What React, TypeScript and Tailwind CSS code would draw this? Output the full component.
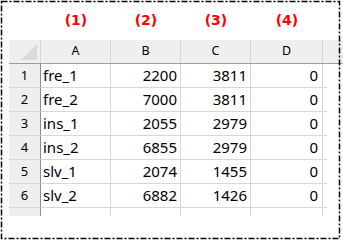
import React from "react";

const rows: [string, number, number, number][] = [
  ["fre_1", 2200, 3811, 0],
  ["fre_2", 7000, 3811, 0],
  ["ins_1", 2055, 2979, 0],
  ["ins_2", 6855, 2979, 0],
  ["slv_1", 2074, 1455, 0],
  ["slv_2", 6882, 1426, 0],
];

const cols = ["A", "B", "C", "D"];
const widths = ["w-[70px]", "w-[70px]", "w-[70px]", "w-[72px]"];

export default function App() {
  return (
    <div className="relative w-[343px] h-[241px] bg-white overflow-hidden">
      <svg className="absolute inset-0 pointer-events-none" width="343" height="241">
        <rect
          x="1.5"
          y="1.5"
          width="338"
          height="237"
          fill="none"
          stroke="#000"
          strokeWidth="1.5"
          strokeDasharray="6 2 2 2"
        />
      </svg>
      <div className="pl-[9px] pt-[10px]">
        <div className="flex h-[20px] items-center">
          <div className="w-[32px]" />
          {["(1)", "(2)", "(3)", "(4)"].map((l, i) => (
            <div
              key={l}
              className={`${widths[i]} text-center text-[14px] font-bold text-[#ff0000] leading-[20px]`}
              style={{ fontFamily: '"DejaVu Sans", sans-serif' }}
            >
              {l}
            </div>
          ))}
        </div>
        <div className="mt-[10px]" style={{ fontFamily: '"Noto Sans", sans-serif' }}>
          {/* header */}
          <div className="flex h-[24px] bg-[#efefef] border-b-[1px] border-[#9c9c9c]">
            <div className="relative w-[32px] border-r border-[#d5d5d5]">
              <svg className="absolute right-[3px] bottom-[3px]" width="16" height="16">
                <polygon points="16,0 16,16 0,16" fill="#dadada" />
              </svg>
            </div>
            {cols.map((c, i) => (
              <div
                key={c}
                className={`${widths[i]} border-r border-[#d5d5d5] flex items-center justify-center text-[12.5px] text-black`}
              >
                {c}
              </div>
            ))}
            <div className="w-[4px]" />
          </div>
          {rows.map((r, idx) => (
            <div key={idx} className="flex h-[24px] text-black">
              <div className="w-[32px] bg-[#efefef] border-r border-b border-r-[#8f8f8f] border-b-[#d9d9d9] flex items-center justify-center text-[13px]">
                {idx + 1}
              </div>
              <div className={`${widths[0]} border-r border-b border-[#d7d7d7] flex items-center pl-[2px] text-[15px]`}>
                {r[0]}
              </div>
              <div className={`${widths[1]} border-r border-b border-[#d7d7d7] flex items-center justify-end pr-[3px] text-[15px]`}>
                {r[1]}
              </div>
              <div className={`${widths[2]} border-r border-b border-[#d7d7d7] flex items-center justify-end pr-[3px] text-[15px]`}>
                {r[2]}
              </div>
              <div className={`${widths[3]} border-r border-b border-[#d7d7d7] flex items-center justify-end pr-[4px] text-[15px]`}>
                {r[3]}
              </div>
              <div className="w-[4px] border-b border-[#d7d7d7]" />
            </div>
          ))}
          <div className="flex h-[8px]">
            <div className="w-[32px] bg-[#efefef] border-r border-[#8f8f8f]" />
            {widths.map((w, i) => (
              <div key={i} className={`${w} border-r border-[#d7d7d7]`} />
            ))}
          </div>
        </div>
      </div>
    </div>
  );
}
